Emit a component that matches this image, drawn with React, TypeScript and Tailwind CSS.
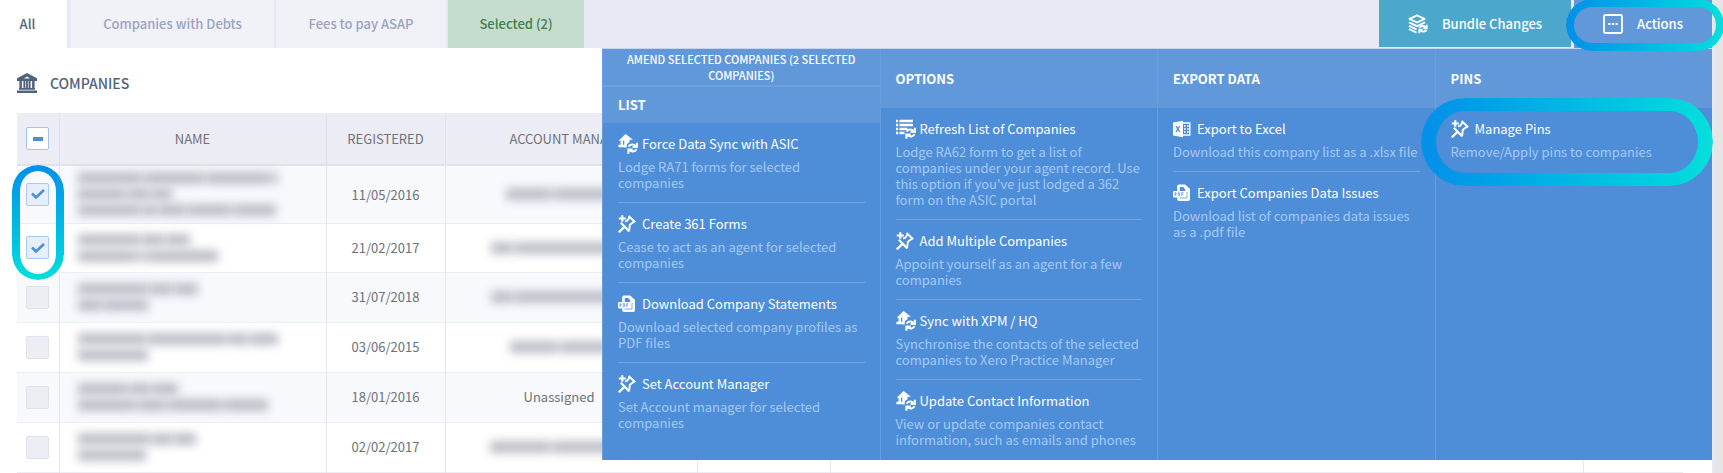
import { useState } from "react"
import type { ReactNode } from "react"
import clsx from "clsx"

function BankIcon() {
  return (
    <svg viewBox="0 0 20 20" className="h-5 w-5" fill="currentColor" aria-hidden="true">
      <path fillRule="evenodd" d="M10 0 20 5.2V8H0V5.2zM7 5.6h6L10 3.4z" />
      <path d="M2.4 8h2.5v8H2.4zM6.4 8h2v8h-2zM9.1 8h1.8v8H9.1zM11.6 8h2v8h-2zM15.1 8h2.5v8h-2.5z" />
      <path d="M2 15h16v1.8H2zM0 17.6h20V20H0z" />
    </svg>
  )
}

function LayersIcon() {
  return (
    <svg viewBox="0 0 20 20" className="h-5 w-5" fill="none" stroke="currentColor" strokeWidth="1.9" aria-hidden="true">
      <path d="M1.500 4.900 9 1.300l7.600 3.600L9 8.500z" strokeLinejoin="round" />
      <path d="m1 8.400 8 3.700 8-3.700M1 11.800l7.500 3.500M1 15l7.500 3.600" />
      <path d="M11.500 13.800c1.200-2.200 4.700-2.400 6-.4M18.700 10.800v3.400h-3.300M18.500 16c-1.200 2-4.400 2.200-5.800.5M11.300 19.200v-3.400h3.300" />
    </svg>
  )
}

function DotsIcon() {
  return (
    <svg viewBox="0 0 20 20" className="h-5 w-5" aria-hidden="true">
      <rect x="1" y="1" width="18" height="18" rx="1.500" fill="none" stroke="currentColor" strokeWidth="1.800" />
      <path d="M5.300 8.900h2.200v2.200H5.300zM8.900 8.900h2.200v2.200H8.900zM12.500 8.900h2.200v2.200h-2.200z" fill="currentColor" />
    </svg>
  )
}

function PinIcon() {
  return (
    <svg viewBox="0 0 18 18" className="h-[18px] w-[18px] shrink-0" fill="none" stroke="currentColor" strokeWidth="1.900" aria-hidden="true">
      <path d="M4.300.3v6.400M.8 3.500h7" strokeWidth="2.200" />
      <path d="m10.600 1 6.600 6.200M11.600 2.200 9.400 5.600l-2.200.9M16.200 6.500l-4.400 3.300-.6 5.800" />
      <path d="m2.800 7.800 8.600 8.700M.8 17.400l5.400-5.300" strokeWidth="2.200" />
    </svg>
  )
}

function SyncIcon() {
  return (
    <svg viewBox="0 0 20 20" className="h-5 w-5 shrink-0" aria-hidden="true">
      <path d="M7.600 0 15 5.800h-3.400v2.400C9.800 8.700 8.800 10 8.700 11.600v2H6.300V6.800H.6z" fill="currentColor" />
      <path d="M3.800 5.500v6M.4 12h6.800" stroke="currentColor" strokeWidth="2.400" />
      <g fill="none" stroke="currentColor" strokeWidth="2">
        <path d="M10.600 12.600c1.300-2.600 5.200-2.800 6.900-.6M18.900 8.800v4.300h-4.300M18.500 15.200c-1.200 2.600-4.800 3.100-6.700 1M10.400 19.700v-4.300h4.300" />
      </g>
    </svg>
  )
}

function ListIcon() {
  return (
    <svg viewBox="0 0 20 20" className="h-5 w-5 shrink-0" fill="none" stroke="currentColor" aria-hidden="true">
      <path d="M0 2h2.200M0 6h2.200M0 10h2.200M0 14h2.200M3.500 2h13.500M3.500 6h13.500M3.500 10h8M3.500 14h5" strokeWidth="2.300" />
      <path d="M10.600 12.600c1.300-2.600 5.200-2.800 6.900-.6M18.900 8.800v4.300h-4.300M18.500 15.200c-1.200 2.600-4.800 3.100-6.700 1M10.400 19.700v-4.300h4.300" strokeWidth="2" />
    </svg>
  )
}

function PdfIcon() {
  return (
    <svg viewBox="0 0 18 18" className="h-[18px] w-[18px] shrink-0" aria-hidden="true">
      <path
        d="M6 .5h6.200L17 5.100V15c0 1.200-.6 2-1.800 2H6c-1.200 0-1.800-.8-1.800-2V2.500C4.200 1.200 4.800.5 6 .5zM6.800 3v4h5.500V5.800L10.300 3z"
        fill="currentColor"
        fillRule="evenodd"
      />
      <rect x="0" y="7" width="13" height="6.500" rx="1" fill="currentColor" />
      <path
        d="M2 12V8.700h1.100v1.600H2M5.200 8.700v2.900h1.400V8.700zM8.700 12V8.700h1.800M8.700 10.200h1.500M14 8v6H6.500"
        fill="none"
        stroke="#4e8dd7"
        strokeWidth=".7"
      />
    </svg>
  )
}

function ExcelIcon() {
  return (
    <svg viewBox="0 0 18 18" className="h-[18px] w-[18px] shrink-0" aria-hidden="true">
      <path d="M0 2.600 10 .8v16.400L0 15.400z" fill="currentColor" />
      <path d="M10 3h6.800v12H10" fill="none" stroke="currentColor" strokeWidth="1.400" />
      <path d="M11 6h1.700M14 6h1.700M11 9h1.700M14 9h1.700M11 12h1.700M14 12h1.700" stroke="currentColor" strokeWidth="1.600" />
      <path d="m3 6 3.700 6M6.700 6 3 12" stroke="#4e8dd7" strokeWidth="1.400" />
    </svg>
  )
}

const icons = {
  pin: <PinIcon />,
  sync: <SyncIcon />,
  list: <ListIcon />,
  pdf: <PdfIcon />,
  excel: <ExcelIcon />,
}

type Item = { icon: keyof typeof icons; title: string; text: string; highlighted?: boolean }
type Section = { heading: string; note?: string; items: Item[] }

const sections: Section[] = [
  {
    heading: "LIST",
    note: "AMEND SELECTED COMPANIES (2 SELECTED COMPANIES)",
    items: [
      { icon: "sync", title: "Force Data Sync with ASIC", text: "Lodge RA71 forms for selected companies" },
      { icon: "pin", title: "Create 361 Forms", text: "Cease to act as an agent for selected companies" },
      { icon: "pdf", title: "Download Company Statements", text: "Download selected company profiles as PDF files" },
      { icon: "pin", title: "Set Account Manager", text: "Set Account manager for selected companies" },
    ],
  },
  {
    heading: "OPTIONS",
    items: [
      {
        icon: "list",
        title: "Refresh List of Companies",
        text: "Lodge RA62 form to get a list of companies under your agent record. Use this option if you've just lodged a 362 form on the ASIC portal",
      },
      { icon: "pin", title: "Add Multiple Companies", text: "Appoint yourself as an agent for a few companies" },
      {
        icon: "sync",
        title: "Sync with XPM / HQ",
        text: "Synchronise the contacts of the selected companies to Xero Practice Manager",
      },
      {
        icon: "sync",
        title: "Update Contact Information",
        text: "View or update companies contact information, such as emails and phones",
      },
    ],
  },
  {
    heading: "EXPORT DATA",
    items: [
      { icon: "excel", title: "Export to Excel", text: "Download this company list as a .xlsx file" },
      { icon: "pdf", title: "Export Companies Data Issues", text: "Download list of companies data issues as a .pdf file" },
    ],
  },
  {
    heading: "PINS",
    items: [{ icon: "pin", title: "Manage Pins", text: "Remove/Apply pins to companies", highlighted: true }],
  },
]

// name and manager hold the word widths of each redacted line
type Row = { registered: string; height: string; name: number[][]; manager?: number[] }

const rows: Row[] = [
  { registered: "11/05/2016", height: "h-[58px]", name: [[64, 60, 64, 6], [48, 22, 20], [62, 14, 28, 44, 42]], manager: [46, 58] },
  { registered: "21/02/2017", height: "h-[49px]", name: [[62, 22, 24], [58, 8, 70]], manager: [22, 112] },
  { registered: "31/07/2018", height: "h-[50px]", name: [[70, 22, 24], [24, 44]], manager: [22, 112] },
  { registered: "03/06/2015", height: "h-[50px]", name: [[68, 78, 20, 28], [70]], manager: [48, 48] },
  { registered: "18/01/2016", height: "h-[50px]", name: [[50, 20, 26], [58, 28, 54, 44]] },
  { registered: "02/02/2017", height: "h-[50px]", name: [[72, 20, 22], [68]], manager: [60, 76] },
]

function Highlight({ className }: { className: string }) {
  return (
    <span
      className={clsx(
        "pointer-events-none absolute z-20 rounded-full from-[#058fe9] to-[#09dedc] [mask:linear-gradient(#000_0_0)_content-box_exclude,linear-gradient(#000_0_0)]",
        className,
      )}
    />
  )
}

function Redacted({ words }: { words: number[] }) {
  return (
    <span className="flex h-4 items-center gap-0.5 blur-[5px]">
      {words.map((width, i) => (
        <span key={i} className="h-3 bg-[#bcbec6]" style={{ width }} />
      ))}
    </span>
  )
}

function Checkbox({ checked, onChange, label, mixed }: { checked: boolean; onChange: () => void; label: string; mixed?: boolean }) {
  return (
    <label className="grid h-6 w-[23px] place-items-center">
      <input
        type="checkbox"
        aria-label={label}
        checked={checked}
        onChange={onChange}
        className={clsx(
          "col-start-1 row-start-1 h-[23px] w-[23px] appearance-none rounded-xs border",
          mixed ? "border-[#a3c4ec] bg-white" : checked ? "border-[#a9c9f0] bg-[#e5eefa]" : "border-[#dfe1ec] bg-[#edeef4]",
        )}
      />
      {(checked || mixed) && (
        <svg viewBox="0 0 14 14" className="pointer-events-none col-start-1 row-start-1 h-[14px] w-[14px]" fill="none" stroke="#4e8dd7" aria-hidden="true">
          {mixed ? <path d="M2 7h10" strokeWidth="4" /> : <path d="M1 6.500 5 10.500 13 3" strokeWidth="2.600" />}
        </svg>
      )}
    </label>
  )
}

function Tab({ children, className }: { children: ReactNode; className: string }) {
  return <button className={clsx("h-12 text-center text-[13px] font-medium", className)}>{children}</button>
}

function ActionsMenu() {
  return (
    <div className="absolute top-full right-0 z-10 grid h-[412px] w-[1110px] grid-cols-4 border-t border-[#c3d5f0] bg-[#4e8dd7] text-left text-white">
      {sections.map((section) => (
        <section key={section.heading} className="border-l border-white/15">
          {section.note && (
            <p className="flex h-[38px] items-center justify-center border-b-2 border-white/10 bg-[#6198da] px-5 text-center text-[11px] leading-4 font-medium">
              {section.note}
            </p>
          )}
          <h2
            className={clsx(
              "flex items-center bg-[#6198da] px-[15px] text-[13px] font-bold",
              section.note ? "h-9" : "h-[59px]",
            )}
          >
            {section.heading}
          </h2>
          <ul className="px-[15px]">
            {section.items.map((item) => (
              <li key={item.title} className="relative border-b border-white/20 pt-[11px] pb-[11px] last:border-b-0">
                <a href="#" className="block">
                  <span className="flex h-5 items-center gap-[6px] text-[13px]">
                    <span className="flex w-[18px]">{icons[item.icon]}</span>
                    {item.title}
                  </span>
                  <span className="mt-[5px] block text-[13px] leading-4 text-[#a5caf6]">{item.text}</span>
                </a>
                {item.highlighted && (
                  <Highlight className="-top-[10px] -right-4 -left-[30px] h-[88px] bg-linear-to-r px-[15px] py-[13px]" />
                )}
              </li>
            ))}
          </ul>
        </section>
      ))}
    </div>
  )
}

export default function App() {
  const [selected, setSelected] = useState([0, 1])

  const toggle = (index: number) =>
    setSelected(selected.includes(index) ? selected.filter((i) => i !== index) : [...selected, index])

  return (
    <div className="overflow-hidden bg-[#e5e5e5] pr-[9px] font-['Noto_Sans_CJK_SC','Source_Sans_Pro',sans-serif]">
      <div className="border-r-2 border-[#e7eaf3] bg-white">
        <header className="flex h-12 justify-between bg-[#e7eaf3]">
          <nav className="flex">
            <Tab className="w-[67px] bg-white pr-3 text-[#4f647c]">All</Tab>
            <Tab className="w-[209px] border-r-2 border-l-4 border-[#e6e9f1] bg-[#f0f2f8] text-[#9ba3bd]">Companies with Debts</Tab>
            <Tab className="w-[172px] border-r-2 border-[#e6e9f1] bg-[#f0f2f8] text-[#9ba3bd]">Fees to pay ASAP</Tab>
            <Tab className="w-[136px] bg-[#c4ddce] text-[#417f50]">Selected (2)</Tab>
          </nav>

          <div className="flex">
            <button className="flex h-[47px] w-[192px] items-center justify-center gap-[14px] bg-[#4ba7cc] text-[13px] font-medium text-white">
              <LayersIcon />
              Bundle Changes
            </button>
            <div className="relative ml-[3px] w-[138px]">
              <button className="flex h-12 w-full items-center justify-center gap-[14px] bg-[#6198da] text-[13px] font-medium text-white">
                <DotsIcon />
                Actions
              </button>
              <Highlight className="-top-px -right-3 -left-2 h-[52px] bg-linear-to-r p-2" />
              <ActionsMenu />
            </div>
          </div>
        </header>

        <main className="pr-[29px] pl-[17px]">
          <h1 className="flex h-[65px] items-center gap-[13px] pt-[5px] text-sm font-medium text-[#4f647c]">
            <BankIcon />
            COMPANIES
          </h1>

          <table className="w-full table-fixed border-collapse text-[13px] text-[#6c717b]">
            <colgroup>
              <col className="w-[42px]" />
              <col className="w-[267px]" />
              <col className="w-[119px]" />
              <col className="w-[252px]" />
              <col className="w-[133px]" />
              <col />
              <col className="w-[100px]" />
            </colgroup>
            <thead>
              <tr className="h-[52px] border-b-2 border-[#dfe1ec] bg-[#ecedf4]">
                <th className="border-r border-[#dfe1ec] pl-[9px]">
                  <Checkbox checked={false} mixed label="Select all companies" onChange={() => setSelected([])} />
                </th>
                <th className="border-r border-[#dfe1ec] font-normal">NAME</th>
                <th className="border-r border-[#dfe1ec] font-normal">REGISTERED</th>
                <th className="border-r border-[#dfe1ec] font-normal">ACCOUNT MANAGER</th>
                <th className="border-r border-[#dfe1ec]" />
                <th className="border-r border-[#dfe1ec]" />
                <th />
              </tr>
            </thead>
            <tbody>
              {rows.map((row, index) => (
                <tr key={row.registered} className={clsx("border-b border-[#eceef4] odd:bg-[#f7f9fd]", row.height)}>
                  <td className="relative border-r border-[#e4e5ef] pl-[9px]">
                    <Checkbox
                      checked={selected.includes(index)}
                      label={`Select company registered ${row.registered}`}
                      onChange={() => toggle(index)}
                    />
                    {index === 0 && <Highlight className="-top-px -right-[5px] -left-[5px] h-[115px] bg-linear-to-b px-2 py-[6px]" />}
                  </td>
                  <td className="border-r border-[#e4e5ef] pl-[18px]">
                    {row.name.map((words, i) => (
                      <Redacted key={i} words={words} />
                    ))}
                  </td>
                  <td className="border-r border-[#e4e5ef] text-center">{row.registered}</td>
                  <td className="border-r border-[#e4e5ef] pr-6">
                    <span className="flex justify-center">{row.manager ? <Redacted words={row.manager} /> : "Unassigned"}</span>
                  </td>
                  <td className="border-r border-[#e4e5ef]" />
                  <td className="border-r border-[#e4e5ef]" />
                  <td />
                </tr>
              ))}
            </tbody>
          </table>
        </main>
      </div>
    </div>
  )
}
